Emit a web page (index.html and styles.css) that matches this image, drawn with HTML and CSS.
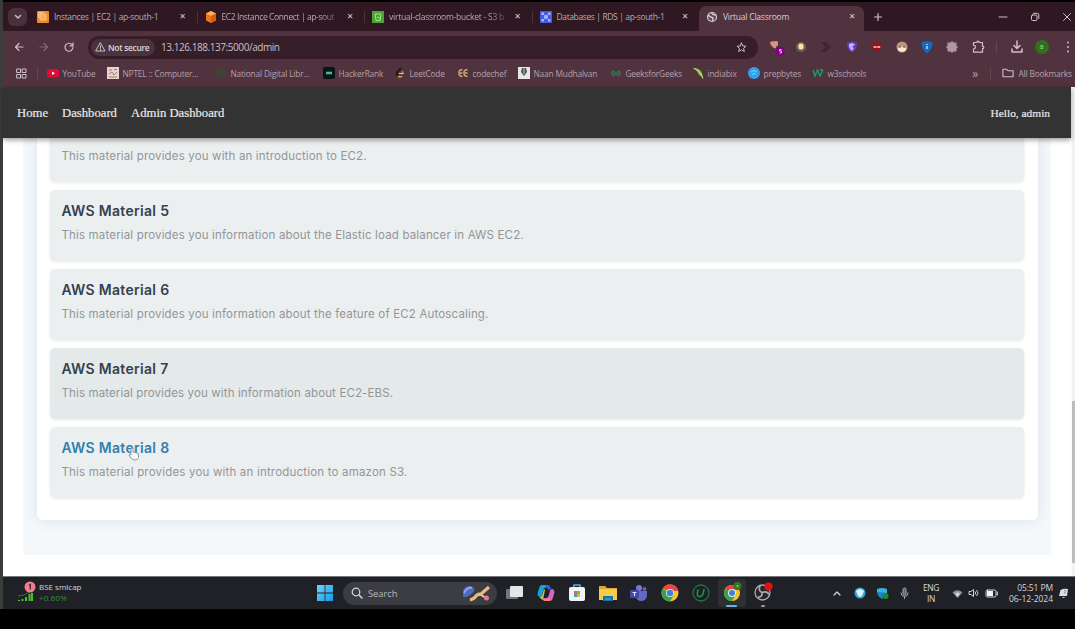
FILE: index.html
```html
<!DOCTYPE html>
<html lang="en">
<head>
<meta charset="utf-8">
<title>Virtual Classroom</title>
<link rel="stylesheet" href="styles.css">
</head>
<body>
<div class="desktop">
<div class="browser">
  <header class="tabs">
    <button class="tab-search"><svg width="8" height="6" viewBox="0 0 8 6"><path d="M1.5 1.5 4 4l2.500-2.500" class="line w15"/></svg></button>
    <div class="tab"><svg class="fav" viewBox="0 0 12 12"><rect width="12" height="12" rx="1" fill="#ec8b2c"/><path d="M3 3h6v6H3zM1.500 7V1.500H7" fill="#f5ad63" stroke="#ffc58b" stroke-width=".8"/></svg><span class="t1">Instances | EC2 | ap-south-1</span><i class="x">✕</i></div>
    <div class="tab"><svg class="fav" viewBox="0 0 12 12"><path d="M6 0 11 2.500v7L6 12 1 9.500v-7z" fill="#ee7616"/><path d="M6 0 11 2.500 6 5 1 2.500z" fill="#ffae57"/><path d="M6 5v7l5-2.500v-7z" fill="#d85d0d"/></svg><span class="t2 fade">EC2 Instance Connect | ap-sout</span><i class="x">✕</i></div>
    <div class="tab"><svg class="fav" viewBox="0 0 12 12"><rect width="12" height="12" fill="#4aa436"/><path d="M3 3h6L8 9.500H4zM5 6l4 1.500" fill="none" stroke="#a6df91" stroke-width="1"/></svg><span class="t3 fade">virtual-classroom-bucket - S3 b</span><i class="x">✕</i></div>
    <div class="tab last"><svg class="fav" viewBox="0 0 12 12"><rect width="12" height="12" fill="#435be0"/><path d="M2 2l2.500 2.500M10 2 7.500 4.500M2 10l2.500-2.500M10 10 7.500 7.500M2 4V2h2M8 2h2v2M2 8v2h2M8 10h2V8" stroke="#c4ceff" fill="none"/><circle cx="6" cy="6" r="2" fill="#a7b5ff"/></svg><span class="t4">Databases | RDS | ap-south-1</span><i class="x">✕</i></div>
    <div class="tab active"><svg class="fav" viewBox="0 0 12 12"><circle cx="6" cy="6" r="4.500" fill="#5d4650" stroke="#d9cbd0" stroke-width="1.200"/><path d="M2 4.500c2 0 2 2 4 2s0 2 1 3.500M6 2c0 2 2 2 4 2" stroke="#d9cbd0" stroke-width="1.500" fill="none"/></svg><span class="t5">Virtual Classroom</span><i class="x">✕</i></div>
    <svg class="plus" width="10" height="10" viewBox="0 0 10 10"><path d="M5 1.500v7M1.500 5h7" class="line w12"/></svg>
    <div class="window-controls">
      <svg width="10" height="10" viewBox="0 0 10 10"><path d="M1 5h8" class="line"/></svg>
      <svg width="10" height="10" viewBox="0 0 10 10"><rect x="1.500" y="3" width="5.500" height="5.500" rx="1" class="line"/><path d="M3.500 1.300h4q1.300 0 1.300 1.300v4" class="line"/></svg>
      <svg width="10" height="10" viewBox="0 0 10 10"><path d="M1.500 1.500l7 7m0-7-7 7" class="line"/></svg>
    </div>
  </header>

  <div class="toolbar">
    <div class="nav-buttons">
      <svg width="10" height="10" viewBox="0 0 10 10"><path d="M9 5H1.500M5 1.500 1.500 5 5 8.500" class="line w12"/></svg>
      <svg class="dim" width="10" height="10" viewBox="0 0 10 10"><path d="M1 5h7.500M5 1.500 8.500 5 5 8.500" class="line w12"/></svg>
      <svg width="10" height="10" viewBox="0 0 10 10"><path d="M8.500 3.300A4 4 0 1 0 9 5.300M9 .8v3H6" class="line w12"/></svg>
    </div>
    <div class="address">
      <div class="security"><svg width="11" height="10" viewBox="0 0 11 10"><path d="M5.500 1 10 9H1zM5.500 4v2.300M5.500 7.200v1" class="line"/></svg><span>Not secure</span></div>
      <span class="url">13.126.188.137:5000/admin</span>
      <svg class="star" width="11" height="11" viewBox="0 0 11 11"><path d="M5.500 1l1.300 2.900 3.200.3-2.400 2.100.7 3.200-2.800-1.700-2.800 1.700.7-3.200L1 4.200l3.200-.3z" class="line"/></svg>
    </div>
    <div class="extensions">
      <svg viewBox="0 0 18 18"><path d="M3 5q0-2 2-1.500 5-1 6 0v4q-2 0-2 3Q5 10 3 5z" fill="#d7957e"/><rect x="9" y="9" width="8.500" height="8.500" rx="2.500" fill="#800080"/><path d="M14.500 11.500h-2v1.500h2v2h-2" stroke="#e8c4e8" fill="none"/></svg>
      <svg viewBox="0 0 18 18"><circle cx="9" cy="9" r="5" fill="#706447"/><rect x="6.500" y="5.500" width="5" height="6" rx="2" fill="#eee7b5"/></svg>
      <svg viewBox="0 0 18 18"><path d="M4 4h5l5 5-5 5H4l4-5z" fill="#3b2830"/></svg>
      <svg viewBox="0 0 18 18"><path d="M4 5l5-2 5 2q0 7-5 9.500Q4 12 4 5z" fill="#6040bb"/><path d="M9 5l3 1.500L9 9l2 1-2 3Q5.500 10 6 6z" fill="#c8adff"/></svg>
      <svg viewBox="0 0 18 18"><path d="M4 5l5-1 5 1q0 6-5 9Q4 11 4 5z" fill="#9a1119"/><path d="M5.500 9h7" stroke="#e8a1a1" stroke-width="1.800" stroke-dasharray="3 .7"/></svg>
      <svg viewBox="0 0 18 18"><circle cx="9" cy="9" r="5.500" fill="#bf947f"/><path d="M5 10q4-3 8 0v2q-4 4-8 0z" fill="#fae5d7"/><circle cx="7" cy="9" r=".8" fill="#4a3229"/><circle cx="11" cy="9" r=".8" fill="#4a3229"/></svg>
      <svg viewBox="0 0 18 18"><path d="M3.500 4.500 9 3l5.500 1.500q0 7-5.500 11-5.500-4-5.500-11z" fill="#126bc4"/><path d="M9 6v1m0 1v3" stroke="#d5eaff" stroke-width="1.300"/></svg>
      <svg viewBox="0 0 18 18"><path d="M9 3l1.500 1.500h3v3L15 9l-1.500 1.500v3h-3L9 15l-1.500-1.500h-3v-3L3 9l1.500-1.500v-3h3z" fill="#ae98a3"/></svg>
      <svg viewBox="0 0 18 18"><path d="M5 4.500h3V3.700q1-1 2 0v.8h3.500v4h.8q1 1 0 2h-.8v3.700H4.500v-3.200q2-.5 2-2t-2-1.800V4.500z" class="line w12"/></svg>
    </div>
    <i class="divider"></i>
    <svg class="download" width="12" height="12" viewBox="0 0 12 12"><path d="M6 0v7M3 4.500l3 3 3-3M1 8v3h10V8" class="line w15"/></svg>
    <span class="avatar">a</span>
    <svg class="kebab" width="4" height="12" viewBox="0 0 4 12"><g fill="#cfbfc6"><circle cx="2" cy="1.500" r="1"/><circle cx="2" cy="6" r="1"/><circle cx="2" cy="10.500" r="1"/></g></svg>
  </div>

  <nav class="bookmarks">
    <svg class="apps" width="11" height="11" viewBox="0 0 11 11"><path d="M1 1h3.500v3.500H1zM6.500 1H10v3.500H6.500zM1 6.500h3.500V10H1zM6.500 6.500H10V10H6.500z" class="line"/></svg>
    <i class="divider"></i>
    <a class="b1"><svg viewBox="0 0 12 12"><rect y="2" width="12" height="8.500" rx="2.500" fill="#e30a35"/><path d="M5 4.500 8 6.200 5 8z" fill="#fff"/></svg><span>YouTube</span></a>
    <a class="b2"><svg viewBox="0 0 12 12"><rect width="12" height="12" fill="#e6d5cc"/><path d="M2 3h3M7 2.500h3M2 7l3-2 2 3 3-3M2 10h8" stroke="#a77d70" fill="none"/></svg><span>NPTEL :: Computer...</span></a>
    <a class="b3"><svg viewBox="0 0 12 12"><circle cx="6" cy="6" r="5.500" fill="#404335"/></svg><span>National Digital Libr...</span></a>
    <a class="b4"><svg viewBox="0 0 12 12"><rect width="12" height="12" rx="2" fill="#0b1419"/><path d="M3 6h6" stroke="#32c697" stroke-width="2.500"/></svg><span>HackerRank</span></a>
    <a class="b5"><svg viewBox="0 0 12 12"><path d="M7 1 3 5.500q-1 1.500 1 3.500" stroke="#1e171a" stroke-width="1.800" fill="none"/><path d="M4 9q2 2 4 0M8 4.500l1 1" stroke="#e69a3a" stroke-width="1.500" fill="none"/><path d="M5 6.500h5" stroke="#cdbdb3" stroke-width="1.200"/></svg><span>LeetCode</span></a>
    <a class="b6"><svg viewBox="0 0 12 12"><path d="M5.500 3Q2 2 2 6t3.500 3M10.500 3Q7 2 7 6t3.500 3M3 6h2.500M8 6h2.500" stroke="#d5a972" stroke-width="1.500" fill="none"/></svg><span>codechef</span></a>
    <a class="b7"><svg viewBox="0 0 12 12"><rect width="12" height="12" fill="#e7e5e6"/><path d="M4 1h4l1 4-3 4-3-4z" fill="#4a5354"/><path d="M6 1v6" stroke="#bdc8c5"/></svg><span>Naan Mudhalvan</span></a>
    <a class="b8"><svg viewBox="0 0 12 12"><path d="M1 6h10M5 4.500Q2 3 2 6q0 3.500 3 2V6M7 4.500q3-1.500 3 1.500 0 3.500-3 2V6" stroke="#27824b" stroke-width="1.200" fill="none"/></svg><span>GeeksforGeeks</span></a>
    <a class="b9"><svg viewBox="0 0 12 12"><path d="M0 1q10-1 11 9-4-1-5-4Q4 2 0 1z" fill="#86b83a"/><path d="M2 1.500q6 2 9 10" stroke="#d2df8a" fill="none"/></svg><span>indiabix</span></a>
    <a class="b10"><svg viewBox="0 0 12 12"><circle cx="6" cy="6" r="6" fill="#31a1eb"/><path d="M3 5q3-3 6 0M4 8l2-2 2 2" stroke="#7fd2ff" fill="none"/></svg><span>prepbytes</span></a>
    <a class="b11"><svg viewBox="0 0 12 12"><path d="M1 3l2 6 2.500-6L8 9l3-6M8 3h3" stroke="#1c9b6c" stroke-width="1.400" fill="none"/></svg><span>w3schools</span></a>
    <b class="more">»</b>
    <i class="divider"></i>
    <a class="all"><svg viewBox="0 0 13 12"><path d="M1 2h4l1.500 1.500H12V10H1z" class="line w12"/></svg><span>All Bookmarks</span></a>
  </nav>

  <div class="viewport">
    <div class="page">
      <nav class="site-nav">
        <a class="home">Home</a><a class="dash">Dashboard</a><a class="admin">Admin Dashboard</a><span class="hello">Hello, admin</span>
      </nav>
      <main class="content">
        <div class="outer"><section class="materials">
          <article class="card clipped"><p class="d4">This material provides you with an introduction to EC2.</p></article>
          <article class="card"><h2>AWS Material 5</h2><p class="d5">This material provides you information about the Elastic load balancer in AWS EC2.</p></article>
          <article class="card"><h2>AWS Material 6</h2><p class="d6">This material provides you information about the feature of EC2 Autoscaling.</p></article>
          <article class="card darker"><h2>AWS Material 7</h2><p class="d7">This material provides you with information about EC2-EBS.</p></article>
          <article class="card"><h2 class="hover">AWS Material 8</h2><p class="d8">This material provides you with an introduction to amazon S3.</p></article>
        </section></div>
      </main>
    </div>
    <div class="scrollbar"><i></i></div>
  </div>
</div>

<footer class="taskbar">
  <div class="stocks">
    <svg width="20" height="22" viewBox="0 0 20 22"><path d="M3 20v-1M6.500 20v-2M10 20v-4M13.500 20v-7M16 20v-8" stroke="#45c72b" stroke-width="2"/><path d="M2 15q6 0 12-4" stroke="#2d7c27" fill="none"/><circle cx="14" cy="6" r="5.500" fill="#ef7f8f"/><path d="M13 4.500l1.300-1v5" stroke="#35242a" stroke-width="1.200" fill="none"/></svg>
    <div><span>BSE smlcap</span><em>+0.60%</em></div>
  </div>
  <div class="apps-row">
    <svg class="windows" viewBox="0 0 18 18"><defs><linearGradient id="win" x2="1" y2="1"><stop stop-color="#6ed5f7"/><stop offset="1" stop-color="#159be8"/></linearGradient></defs><path d="M1 1h7.600v7.600H1zM9.400 1H17v7.600H9.400zM1 9.400h7.600V17H1zM9.400 9.400H17V17H9.400z" fill="url(#win)"/></svg>
    <div class="search"><svg width="12" height="12" viewBox="0 0 12 12"><circle cx="5" cy="5" r="3.800" class="line w12"/><path d="m8 8 3 3" class="line w15"/></svg><span>Search</span><svg class="sport" width="28" height="18" viewBox="0 0 28 18"><path d="M1 13q-1-11 6-11 6 0 5 5-5 7-11 6z" fill="#5268bc"/><path d="M2 9q3-6 8-5" stroke="#91a5ec" stroke-width="2" fill="none"/><path d="m16 9 8 5" stroke="#efd0b0" stroke-width="2"/><path d="M8 16q4-1 7-5l4-1 8-7" stroke="#e9b981" stroke-width="3.200" fill="none"/><circle cx="24.500" cy="14" r="2.500" fill="#e7788f"/></svg></div>
    <svg viewBox="0 0 18 18"><rect x="0" y="5" width="12" height="10" rx="1" fill="#74767a"/><rect x="4" y="2" width="13" height="11" rx="1" fill="#e4e5e7"/></svg>
    <svg viewBox="0 0 18 18"><path d="M5 1h5q2 0 2.500 2.500H9q-2 0-2.500 2L5 11q-.5 2-2.500 2Q0 12 .8 8.500L2.500 3Q3 1 5 1z" fill="#1e9fd8"/><path d="M9 1h2q2 0 2.500 3H16q-3 0-4 3L10 3.500H8z" fill="#2563d8"/><path d="M2.500 13Q5 13 5.500 10L7 5l1 1-2 10q-2-.5-3.500-3z" fill="#b8cc48"/><path d="M13 17H8q-2 0-2.500-3H9q2 0 2.500-2L13 7q.5-2 2.500-2 2.500 1 1.700 4.500L15.500 15q-.5 2-2.500 2z" fill="#df62c0"/><path d="M6 15h4q2 0 2.500-2l1 3q-1 1-2.500 1H8q-1.500 0-2-2z" fill="#f58a4c"/></svg>
    <svg viewBox="0 0 18 18"><path d="M6 4V1h6v3" stroke="#4eafe3" stroke-width="1.500" fill="none"/><rect x="1" y="3" width="16" height="14" rx="2" fill="#f1f3f4"/><path d="M6 7h3v3H6z" fill="#ed683c"/><path d="M9 7h3v3H9z" fill="#86b83c"/><path d="M6 10h3v3H6z" fill="#349fe3"/><path d="M9 10h3v3H9z" fill="#efb52e"/></svg>
    <svg viewBox="0 0 18 18"><path d="M0 2h6l2 2h10v12H0z" fill="#e4a52c"/><path d="M0 5h18v11H0z" fill="#f7ca4b"/><path d="M4 17v-5h10v5z" fill="#1774a8"/><path d="M6 15h6" stroke="#44aee0"/></svg>
    <svg viewBox="0 0 18 18"><circle cx="9" cy="4" r="3" fill="#7777d9"/><circle cx="14.500" cy="5" r="2" fill="#6262be"/><path d="M6 7h11v5q-1 5-6 5-4 0-5-4z" fill="#6667c5"/><rect y="6" width="9" height="8" rx="1" fill="#4547a5"/><path d="M2.500 8.500h4m-2 0V12" stroke="#d9dcff" stroke-width="1.200"/></svg>
    <svg viewBox="0 0 18 18"><circle cx="9" cy="9" r="8.500" fill="#f4c52d"/><path d="M1.600 4.800A8.500 8.500 0 0 1 17.400 7H9z" fill="#e5483c"/><path d="M1.600 4.800A8.500 8.500 0 0 0 9 17.500l4-7-4-2z" fill="#36a250"/><circle cx="9" cy="9" r="4" fill="#e7eef8"/><circle cx="9" cy="9" r="3.200" fill="#437fd9"/></svg>
    <svg viewBox="0 0 18 18"><circle cx="9" cy="9" r="8" fill="#17251f" stroke="#26704c" stroke-width="1.300"/><path d="M6 5.500 5.300 10q0 3 3 2.500 2.200-.5 3-3.500l.8-4" stroke="#338c60" stroke-width="1.500" fill="none"/></svg>
    <div class="running"><svg viewBox="0 0 18 18"><circle cx="9" cy="10" r="8" fill="#f2c52d"/><path d="M2 6a8 8 0 0 1 12-2L9 10z" fill="#e5483c"/><path d="M2 6a8 8 0 0 0 7 12l4-7-4-2z" fill="#36a250"/><circle cx="9" cy="10" r="4" fill="#e7eef8"/><circle cx="9" cy="10" r="3" fill="#437fd9"/><circle cx="14.500" cy="3" r="4" fill="#327528"/><circle cx="14.500" cy="3" r="1" fill="#a1c894"/></svg><i></i></div>
    <div class="recording"><svg viewBox="0 0 18 18"><circle cx="8.500" cy="9.500" r="7.500" fill="#272729" stroke="#aaaaae" stroke-width="1.300"/><path d="M8 9.500Q4 8 6 3M8 9.500q5-2 7 2M8 9.500q1 4-4 5" stroke="#aaaaae" stroke-width="1.700" fill="none"/><circle cx="14.500" cy="3.500" r="4" fill="#f10c0c"/></svg><i></i></div>
  </div>
  <div class="tray">
    <svg class="up" width="8" height="6" viewBox="0 0 8 6"><path d="m1 5 3-3 3 3" class="line w12"/></svg>
    <svg class="whats" width="12" height="12" viewBox="0 0 12 12"><circle cx="6" cy="6" r="5.500" fill="#35a6d6"/><path d="M2 4q4-4 8 0L8 9 6 10 4 9z" fill="#d8f3ff"/></svg>
    <svg class="shield" width="13" height="13" viewBox="0 0 13 13"><path d="M1 2l5-1 5 1q1 7-5 10Q0 9 1 2z" fill="#1685c9"/><path d="M6 1l5 1v4L1 5V2z" fill="#38b2df"/><circle cx="9.500" cy="9" r="3" fill="#218b2c"/></svg>
    <svg class="mic" width="9" height="13" viewBox="0 0 9 13"><rect x="3" y="1" width="3" height="7" rx="1.500" fill="#53696d" stroke="#9caeb1"/><path d="M1 5.500q0 4 3.500 4T8 5.500M4.500 9.500V12" stroke="#9caeb1" fill="none"/></svg>
    <div class="lang"><span>ENG</span><span>IN</span></div>
    <svg class="wifi" width="11" height="9" viewBox="0 0 11 9"><path d="M.5 3.500Q5.500-1 10.500 3.500L5.500 9z" fill="#8e8f93"/><path d="M3 4.500q2.500-2 5 0L5.500 8z" fill="#d3d4d7"/></svg>
    <svg class="sound" width="12" height="10" viewBox="0 0 12 10"><path d="M1 3.500h2l2.500-2v7L3 6.500H1zM7 3.500q1.500 1.500 0 3M8.500 2q3 3 0 6" stroke="#cfd0d3" fill="none"/></svg>
    <svg class="battery" width="13" height="9" viewBox="0 0 13 9"><rect x="1" y="1" width="10" height="7" rx="1.500" class="line"/><path d="M2 2h6v5H2z" fill="#f2f2f2"/><path d="M12.300 3v3" class="line"/></svg>
    <div class="clock"><span>05:51 PM</span><span>06-12-2024</span></div>
    <svg class="bell" width="10" height="12" viewBox="0 0 10 12"><path d="M1.500 3q3-2 7.500-1l-1 7H0z" fill="#dedfe2"/><path d="M3 10q2 2 3 0z" fill="#dedfe2"/><path d="M5 3.500h2L5 6h2" stroke="#85878c" stroke-width=".7" fill="none"/></svg>
  </div>
</footer>
</div>
<svg class="cursor" width="12" height="14" viewBox="0 0 12 14"><path d="M3 8V1.500q1-1.500 2 0V5l4 1q1.500 0 1.500 2v2.500Q9.500 13 7 13 4 13 3 11L1 8q1-1.500 2 0z" fill="#f5f9fb" stroke="#8997a0" stroke-width="1"/></svg>
</body>
</html>
```

FILE: styles.css
```css
* { box-sizing: border-box; }
body { margin: 0; width: 1075px; height: 629px; overflow: hidden; background: #000; font-family: "Open Sans", "Noto Sans", sans-serif; }
svg { flex: none; display: block; overflow: visible; }
span { white-space: nowrap; }
i, em { font-style: normal; }
.line { fill: none; stroke: #cfbfc6; stroke-width: 1; stroke-linecap: round; stroke-linejoin: round; }
.w12 { stroke-width: 1.2; }
.w15 { stroke-width: 1.5; }
.desktop { height: 609px; margin-bottom: 20px; padding-top: 2px; padding-left: 3px; background: linear-gradient(90deg, #3b3d3b 3px, #000 3px); display: flex; flex-direction: column; }
.browser { height: 574px; display: flex; flex-direction: column; box-shadow: 0 -2px #000; }

.tabs { height: 29px; flex: none; background: #2f1821; display: flex; align-items: center; padding-left: 5px; color: #b9a9b0; }
.tab-search { width: 19px; height: 18px; border: 0; border-radius: 6px; padding: 0; background: #4a303b; display: grid; place-items: center; margin-right: 3px; }
.tab { width: 167.5px; flex: none; height: 12px; padding: 0 10px 0 7px; display: flex; align-items: center; gap: 5px; font-size: 8.5px; letter-spacing: -.33px; border-right: 1px solid #4b313c; }
.tab span { flex: 1; min-width: 0; line-height: 14px; }
.tab .t4 { letter-spacing: -.38px; }
.tab .t2 { letter-spacing: -.4px; }
.tab .t3 { letter-spacing: -.22px; }
.tab .fade { mask-image: linear-gradient(90deg, #000 82%, #0003); }
.tab .x { font-size: 8px; letter-spacing: 0; font-family: "DejaVu Sans", sans-serif; color: #d9cbd0; width: 8px; text-align: center; }
.tab.last { border-color: transparent; }
.fav { width: 12px; height: 12px; }
.tab.active { width: 165px; height: 25px; margin-top: 4px; margin-left: -1px; padding: 0 8px 4px 7px; border: 0; border-radius: 7px 7px 0 0; background: #50333f; color: #d9cbd0; letter-spacing: -.22px; }
.plus { margin-left: 9px; }
.window-controls { display: flex; gap: 22px; margin-left: auto; padding-right: 3px; }

.toolbar { height: 32px; flex: none; background: #50333f; display: flex; align-items: center; }
.nav-buttons { display: flex; gap: 15px; padding-left: 11px; width: 85px; }
.dim { opacity: .4; }
.address { height: 23px; width: 670px; border-radius: 12px; background: #351e27; display: flex; align-items: center; padding-left: 3px; color: #cdbec5; }
.security { width: 64px; height: 17px; border-radius: 9px; background: #4b333e; display: flex; align-items: center; padding-left: 4px; gap: 2px; font-size: 8.5px; font-weight: 600; letter-spacing: -.32px; color: #dfd2d7; }
.url { margin-left: 6px; font-size: 10px; letter-spacing: -.44px; }
.star { margin-left: auto; margin-right: 11px; }
.extensions { display: flex; gap: 7.2px; padding-left: 9px; }
.extensions svg { width: 18px; height: 18px; }
.divider { width: 1px; height: 11px; background: #654852; flex: none; }
.toolbar .divider { margin-left: 9px; }
.download { margin-left: 14px; }
.avatar { width: 14px; height: 14px; border-radius: 50%; background: #2f701e; color: #b9d6af; font-size: 7px; line-height: 13px; text-align: center; margin-left: 12px; }
.kebab { margin-left: 17px; }

.bookmarks { height: 24px; flex: none; background: #50333f; display: flex; align-items: center; padding: 0 0 4px 13px; color: #b5a1aa; font-size: 8.3px; letter-spacing: -.16px; }
.bookmarks .divider { margin: 0 9px 0 10px; }
.bookmarks a { display: flex; align-items: center; gap: 3.5px; flex: none; }
.bookmarks a svg { width: 12px; height: 12px; }
.b1 { width: 60px; } .b2 { width: 108px; } .b3 { width: 108px; } .b4 { width: 71px; }
.b5 { width: 63px; } .b6 { width: 61px; } .b7 { width: 92px; } .b8 { width: 82px; }
.b9 { width: 56px; } .b10 { width: 64px; } .b11 { width: 60px; }
.more { margin-left: auto; font-weight: 400; font-size: 12px; }
.bookmarks .more + .divider { margin: 0 11px 0 12px; }
.bookmarks .all { width: 73px; gap: 4.5px; }

.viewport { flex: 1; min-height: 0; display: flex; background: #fff; }
.page { flex: 1; min-width: 0; display: flex; flex-direction: column; }
.scrollbar { width: 4px; background: #f2f2f3; border-left: 1px solid #fbfbfb; padding-top: 314px; }
.scrollbar i { display: block; height: 162px; background: #bdbdbe; }
.site-nav { height: 51px; flex: none; background: #333; display: flex; align-items: center; padding: 1px 21px 0 14px; font: 12.7px "Liberation Serif", serif; color: #e8e8e8; -webkit-text-stroke: .2px #e8e8e8; z-index: 1; box-shadow: 0 2px 5px #0006; }
.home { width: 45px; } .dash { width: 69px; }
.hello { margin-left: auto; font-size: 11.4px; }
.content { flex: 1; min-height: 0; overflow: hidden; padding: 0 20px; }
.outer { height: 417px; padding: 0 13px 35px 14px; background: #f5f8fa; }
.materials { height: 382px; background: #fff; border-radius: 0 0 6px 6px; box-shadow: 0 0 14px #dadfee; padding: 0 14px 0 13px; display: flex; flex-direction: column; gap: 8px; }
.card { height: 71px; flex: none; background: #ebeff0; border-radius: 5px; padding: 11px 11.5px; box-shadow: 0 1px 3px #00000017; font-family: Inter, sans-serif; }
.card.clipped { height: 43.5px; border-radius: 0 0 5px 5px; padding-top: 9px; }
.card.darker { background: #e4e9e9; }
.card h2 { margin: 0; font-size: 14px; line-height: 20px; letter-spacing: .3px; font-weight: 600; color: #35414e; white-space: nowrap; }
.card h2.hover { color: #337fad; }
.card p { margin: 5px 0 0; font-size: 11.5px; line-height: 19px; letter-spacing: .16px; color: #929699; white-space: nowrap; }
.card .d7 { letter-spacing: .13px; }
.card .d8 { letter-spacing: .19px; }
.card.clipped p { margin: 0; }
.cursor { position: absolute; left: 128px; top: 447px; }

.taskbar { height: 33px; flex: none; background: #202126; border-top: 1px solid #77797b; display: flex; align-items: center; color: #d5d6d9; }
.taskbar .line { stroke: #d8d9dc; }
.stocks { width: 311px; display: flex; padding: 0 0 2px 13px; gap: 3px; font-size: 8px; line-height: 11px; }
.stocks div span, .stocks div em { display: block; }
.stocks em { color: #3f8d3b; letter-spacing: .15px; }
.apps-row { display: flex; align-items: center; gap: 13px; width: 513px; }
.apps-row > svg, .running svg, .recording svg { width: 18px; height: 18px; }
.apps-row .windows { margin: 0 -4px 0 2px; }
.search { width: 154px; height: 23px; margin-right: -4.5px; border-radius: 12px; background: #3c3d42; display: flex; align-items: center; padding: 0 7px 0 8px; font-size: 9.3px; color: #b8b9bc; gap: 5px; }
.sport { margin-left: auto; }
.running { margin: 0 -5px; width: 28px; height: 28px; border-radius: 3px; background: #2d2f32; padding: 4px 5px 0; display: grid; justify-items: center; align-content: space-between; }
.running i { width: 11px; height: 2px; border-radius: 1px; background: #6bb6db; }
.recording { height: 28px; padding-top: 4px; display: grid; justify-items: center; align-content: space-between; }
.recording i { width: 4px; height: 2px; border-radius: 1px; background: #97999c; }
.tray { display: flex; align-items: center; font-size: 8.5px; line-height: 11.5px; padding-left: 6px; }
.whats { margin-left: 13px; } .shield { margin-left: 10px; } .mic { margin-left: 11px; }
.lang, .clock { display: flex; flex-direction: column; }
.lang { width: 18px; margin-left: 13px; align-items: center; letter-spacing: -.4px; }
.wifi { margin-left: 12px; } .sound { margin-left: 5px; } .battery { margin-left: 5px; }
.clock { width: 45px; margin-left: 10px; align-items: flex-end; letter-spacing: 0; }
.clock span:last-child { letter-spacing: -.04px; }
.clock span:first-child { letter-spacing: -.1px; }
.bell { margin-left: 6px; }
```
